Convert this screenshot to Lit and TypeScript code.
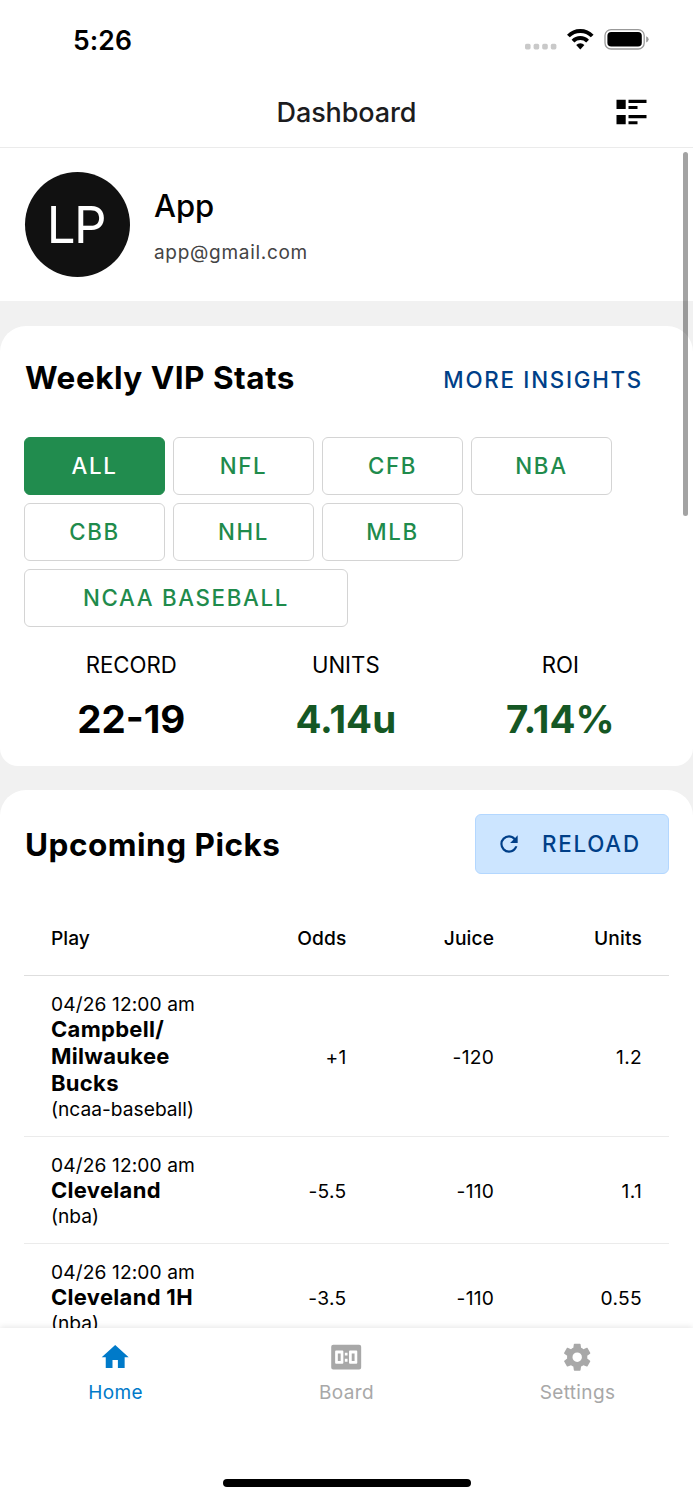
import { LitElement, html, svg, css } from "lit";
import { customElement, property, state } from "lit/decorators.js";
import { classMap } from "lit/directives/class-map.js";

const leagues = ["ALL", "NFL", "CFB", "NBA", "CBB", "NHL", "MLB", "NCAA BASEBALL"];

const picks = [
  { date: "04/26 12:00 am", team: "Campbell/ Milwaukee Bucks", league: "ncaa-baseball", odds: "+1", juice: "-120", units: "1.2" },
  { date: "04/26 12:00 am", team: "Cleveland", league: "nba", odds: "-5.5", juice: "-110", units: "1.1" },
  { date: "04/26 12:00 am", team: "Cleveland 1H", league: "nba", odds: "-3.5", juice: "-110", units: "0.55" },
];

const icons = {
  home: svg`<path d="M10,20V14H14V20H19V12H22L12,3L2,12H5V20H10Z"/>`,
  board: svg`<path fill-rule="evenodd" d="M2.4,2.8H21.6Q23.1,2.8 23.1,4.3V19.7Q23.1,21.2 21.6,21.2H2.4Q.9,21.2 .9,19.7V4.3Q.9,2.8 2.4,2.8ZM4.5,7.1Q3.8,7.1 3.8,7.8V16.2Q3.8,16.9 4.5,16.9H9.2Q9.9,16.9 9.9,16.2V7.8Q9.9,7.1 9.2,7.1ZM5.8,9.2H7.9V14.8H5.8ZM14.8,7.1Q14.1,7.1 14.1,7.8V16.2Q14.1,16.9 14.8,16.9H19.5Q20.2,16.9 20.2,16.2V7.8Q20.2,7.1 19.5,7.1ZM16.1,9.2H18.2V14.8H16.1ZM11,8.7V10.8H13V8.7ZM11,13.2V15.3H13V13.2Z"/>`,
  settings: svg`<path d="M12,15.5A3.5,3.5 0 0,1 8.5,12A3.5,3.5 0 0,1 12,8.5A3.5,3.5 0 0,1 15.5,12A3.5,3.5 0 0,1 12,15.5M19.43,12.97C19.47,12.65 19.5,12.33 19.5,12C19.5,11.67 19.47,11.34 19.43,11L21.54,9.37C21.73,9.22 21.78,8.95 21.66,8.73L19.66,5.27C19.54,5.05 19.27,4.96 19.05,5.05L16.56,6.05C16.04,5.66 15.5,5.32 14.87,5.07L14.5,2.42C14.46,2.18 14.25,2 14,2H10C9.75,2 9.54,2.18 9.5,2.42L9.13,5.07C8.5,5.32 7.96,5.66 7.44,6.05L4.95,5.05C4.73,4.96 4.46,5.05 4.34,5.27L2.34,8.73C2.21,8.95 2.27,9.22 2.46,9.37L4.57,11C4.53,11.34 4.5,11.67 4.5,12C4.5,12.33 4.53,12.65 4.57,12.97L2.46,14.63C2.27,14.78 2.21,15.05 2.34,15.27L4.34,18.73C4.46,18.95 4.73,19.03 4.95,18.95L7.44,17.94C7.96,18.34 8.5,18.68 9.13,18.93L9.5,21.58C9.54,21.82 9.75,22 10,22H14C14.25,22 14.46,21.82 14.5,21.58L14.87,18.93C15.5,18.67 16.04,18.34 16.56,17.94L19.05,18.95C19.27,19.03 19.54,18.95 19.66,18.73L21.66,15.27C21.78,15.05 21.73,14.78 21.54,14.63L19.43,12.97Z"/>`,
};

const tabs: { label: string; icon: keyof typeof icons }[] = [
  { label: "Home", icon: "home" },
  { label: "Board", icon: "board" },
  { label: "Settings", icon: "settings" },
];

@customElement("status-bar")
class StatusBar extends LitElement {
  static styles = css`
    :host { display: flex; justify-content: space-between; align-items: center; height: 78px; padding: 0 44px 0 73px; box-sizing: border-box; }
    .time { font-size: 26.5px; font-weight: 600; letter-spacing: 0.1px; line-height: 32px; padding-top: 1px; }
    .signals { display: block; }
  `;
  render() {
    return html`
      <div class="time">5:26</div>
      <svg class="signals" width="125" height="24" viewBox="524 27 125 24">
        <g fill="#c9c9c9">
          <rect x="525" y="43.8" width="5.6" height="5.6" rx="1.6" />
          <rect x="533.6" y="43.8" width="5.6" height="5.6" rx="1.6" />
          <rect x="542.2" y="43.8" width="5.6" height="5.6" rx="1.6" />
          <rect x="550.8" y="43.8" width="5.6" height="5.6" rx="1.6" />
        </g>
        <g fill="none" stroke="#000" stroke-width="3.9">
          <path d="M568.4 36A16.7 16.7 0 0 1 592.2 36" />
          <path d="M573 41.1A10.2 10.2 0 0 1 587.6 41.1" />
        </g>
        <path d="M576.2 44.9A5.9 5.9 0 0 1 584.4 44.9L580.3 49.4Z" />
        <rect x="605" y="29.6" width="39.2" height="19.4" rx="6" fill="none" stroke="#999" stroke-width="1.3" />
        <rect x="607.4" y="32" width="34.4" height="14.6" rx="3.8" />
        <path d="M646.2 36.2Q648.6 37 648.6 39.3Q648.6 41.6 646.2 42.4Z" fill="#999" />
      </svg>
    `;
  }
}

@customElement("user-profile")
class UserProfile extends LitElement {
  static styles = css`
    :host { display: flex; align-items: center; gap: 24.5px; height: 153px; padding: 0 24.5px; box-sizing: border-box; background: #fff; }
    .avatar { width: 105px; height: 105px; border-radius: 50%; background: #111; color: #fff; display: grid; place-items: center; font-size: 51px; line-height: 60px; letter-spacing: -1.4px; box-sizing: border-box; padding-right: 2px; }
    .info { display: flex; flex-direction: column; gap: 15px; padding-top: 3px; }
    .name { font-size: 31px; line-height: 38px; font-weight: 500; letter-spacing: -0.1px; }
    .mail { font-size: 19px; line-height: 26px; color: #444; letter-spacing: 0.7px; }
  `;
  render() {
    return html`
      <div class="avatar">LP</div>
      <div class="info">
        <div class="name">App</div>
        <div class="mail">app@gmail.com</div>
      </div>
    `;
  }
}

@customElement("weekly-stats")
class WeeklyStats extends LitElement {
  @state() selected = "ALL";
  static styles = css`
    :host { display: block; height: 440px; box-sizing: border-box; padding: 24px 24px 0; background: #fff; border-radius: 26px 26px 18px 18px; }
    .head { display: flex; justify-content: space-between; align-items: center; height: 58px; padding: 0 26px 0 1px; }
    .title { font-size: 31.5px; font-weight: 700; line-height: 40px; letter-spacing: 0.5px; padding-bottom: 2px; }
    .more { color: #003f88; font-size: 22.3px; font-weight: 450; letter-spacing: 1.75px; }
    .chips { display: flex; flex-wrap: wrap; gap: 8px; margin-top: 29px; }
    .chip { width: 141px; height: 58px; box-sizing: border-box; border: 1px solid #d4d4d4; border-radius: 6px; display: grid; place-items: center; color: #1f8b4c; font-size: 22.3px; font-weight: 450; letter-spacing: 1.65px; padding-bottom: 2px; }
    .wide { width: 324px; }
    .on { background: #218c4e; border-color: #218c4e; color: #fff; }
    .stats { display: grid; grid-template-columns: repeat(3, 1fr); text-align: center; margin-top: 24px; padding-right: 1.5px; }
    .label { font-size: 22.2px; line-height: 28px; }
    .value { font-size: 38.5px; line-height: 48px; font-weight: 700; margin-top: 16px; }
    .good { color: #155724; }
  `;
  render() {
    return html`
      <div class="head"><div class="title">Weekly VIP Stats</div><div class="more">MORE INSIGHTS</div></div>
      <div class="chips">
        ${leagues.map(
          (l) => html`<div class=${classMap({ chip: true, on: l === this.selected, wide: l.length > 3 })} @click=${() => (this.selected = l)}>${l}</div>`
        )}
      </div>
      <div class="stats">
        <div><div class="label">RECORD</div><div class="value">22-19</div></div>
        <div><div class="label">UNITS</div><div class="value good">4.14u</div></div>
        <div><div class="label">ROI</div><div class="value good">7.14%</div></div>
      </div>
    `;
  }
}

@customElement("upcoming-picks")
class UpcomingPicks extends LitElement {
  static styles = css`
    :host { display: block; box-sizing: border-box; padding: 24px 24px 0; background: #fff; border-radius: 26px 26px 0 0; }
    .head { display: flex; justify-content: space-between; align-items: center; height: 60px; padding-left: 1px; }
    .title { font-size: 31.5px; font-weight: 700; line-height: 40px; letter-spacing: 0.5px; padding-top: 1px; }
    .reload { width: 194px; height: 60px; box-sizing: border-box; border: 1.5px solid #b3d7ff; border-radius: 6px; background: #cce5ff; color: #003f88; display: flex; align-items: center; gap: 20px; padding: 0 0 1px 20px; font-size: 22.3px; font-weight: 450; letter-spacing: 1.8px; }
    .refresh { width: 26px; height: 26px; fill: currentColor; flex: none; }
    .row { display: grid; grid-template-columns: repeat(4, 1fr); align-items: center; box-sizing: border-box; padding: 16px 27px 15px; border-bottom: 1px solid #ebebeb; font-size: 19.2px; line-height: 24px; }
    .top { height: 78px; margin-top: 24px; padding-top: 2px; padding-bottom: 0; border-color: #dedede; font-weight: 500; }
    .num { text-align: right; letter-spacing: 0.3px; }
    .top .num { letter-spacing: 0.15px; }
    .date { white-space: nowrap; letter-spacing: 0.1px; }
    .team { font-size: 22px; line-height: 27px; font-weight: 700; letter-spacing: 0.3px; }
  `;
  render() {
    return html`
      <div class="head">
        <div class="title">Upcoming Picks</div>
        <div class="reload">
          <svg class="refresh" viewBox="0 0 24 24"><path d="M17.65,6.35C16.2,4.9 14.21,4 12,4A8,8 0 0,0 4,12A8,8 0 0,0 12,20C15.73,20 18.84,17.45 19.73,14H17.65C16.83,16.33 14.61,18 12,18A6,6 0 0,1 6,12A6,6 0 0,1 12,6C13.66,6 15.14,6.69 16.22,7.78L13,11H20V4L17.65,6.35Z" /></svg>
          <span>RELOAD</span>
        </div>
      </div>
      <div class="row top">
        <div>Play</div><div class="num">Odds</div><div class="num">Juice</div><div class="num">Units</div>
      </div>
      ${picks.map(
        (p) => html`<div class="row">
          <div>
            <div class="date">${p.date}</div>
            <div class="team">${p.team}</div>
            <div>(${p.league})</div>
          </div>
          <div class="num">${p.odds}</div><div class="num">${p.juice}</div><div class="num">${p.units}</div>
        </div>`
      )}
    `;
  }
}

@customElement("tab-bar")
class TabBar extends LitElement {
  @property() active = "Home";
  static styles = css`
    :host { display: flex; flex-direction: column; align-items: center; justify-content: space-between; height: 172px; box-sizing: border-box; padding: 13px 0; background: #fff; box-shadow: 0 -1px 6px rgba(0, 0, 0, 0.1); position: relative; }
    .tabs { display: grid; grid-template-columns: repeat(3, 1fr); width: 100%; }
    .tab { display: flex; flex-direction: column; align-items: center; gap: 7px; color: #a8a8a8; font-size: 19px; line-height: 26px; letter-spacing: 0.35px; }
    .active { color: #007ac9; }
    .icon { width: 32.4px; height: 32.4px; fill: currentColor; }
    .indicator { width: 248px; height: 8px; border-radius: 4px; background: #000; }
  `;
  render() {
    return html`
      <div class="tabs">
        ${tabs.map(
          (t) => html`<div class=${classMap({ tab: true, active: t.label === this.active })}>
            <svg class="icon" viewBox="0 0 24 24">${icons[t.icon]}</svg>
            <span>${t.label}</span>
          </div>`
        )}
      </div>
      <div class="indicator"></div>
    `;
  }
}

@customElement("app-root")
class AppRoot extends LitElement {
  static styles = css`
    :host { display: flex; flex-direction: column; width: 693px; height: 1500px; overflow: hidden; background: #fff; color: #000; font-family: Inter, "Liberation Sans", sans-serif; }
    .header { display: grid; grid-template-columns: 1fr auto 1fr; align-items: center; height: 70px; padding: 0 46px; border-bottom: 1px solid #ebebeb; flex: none; box-sizing: border-box; }
    .heading { grid-column: 2; font-size: 27px; line-height: 34px; font-weight: 500; color: #1c1c1e; letter-spacing: -0.1px; }
    .list { justify-self: end; display: block; margin-bottom: 1px; }
    .body { flex: 1; min-height: 0; overflow: hidden; background: #f1f1f1; position: relative; display: flex; flex-direction: column; }
    .body > * { flex: none; }
    .stack { display: flex; flex-direction: column; gap: 24px; }
    .profile { margin-bottom: 1px; }
    .thumb { position: absolute; top: 4px; right: 5px; width: 5px; height: 364px; border-radius: 3px; background: rgba(0, 0, 0, 0.36); }
  `;
  render() {
    return html`
      <status-bar></status-bar>
      <div class="header">
        <div class="heading">Dashboard</div>
        <svg class="list" width="31" height="26" viewBox="616.5 99 31 26">
          <path d="M617 99.8h9.2v9.2H617zM617 115h9.2v9.2H617zM629 99.8h18v3.2H629zM629 106h9v3H629zM629 115h18v3.2H629zM629 121.2h9v3H629z" />
        </svg>
      </div>
      <div class="body">
        <div class="stack">
          <user-profile class="profile"></user-profile>
          <weekly-stats></weekly-stats>
          <upcoming-picks></upcoming-picks>
        </div>
        <div class="thumb"></div>
      </div>
      <tab-bar></tab-bar>
    `;
  }
}
